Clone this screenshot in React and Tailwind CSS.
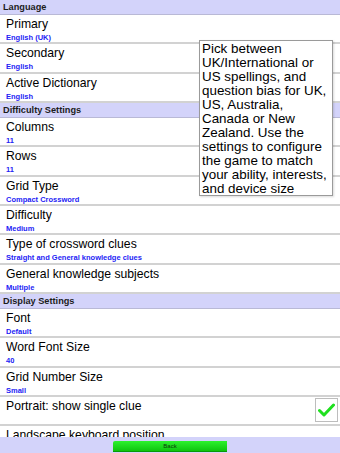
import React from "react";

const sections = [
  {
    title: "Language",
    rows: [
      ["Primary", "English (UK)"],
      ["Secondary", "English"],
      ["Active Dictionary", "English"],
    ],
  },
  {
    title: "Difficulty Settings",
    rows: [
      ["Columns", "11"],
      ["Rows", "11"],
      ["Grid Type", "Compact Crossword"],
      ["Difficulty", "Medium"],
      ["Type of crossword clues", "Straight and General knowledge clues"],
      ["General knowledge subjects", "Multiple"],
    ],
  },
  {
    title: "Display Settings",
    rows: [
      ["Font", "Default"],
      ["Word Font Size", "40"],
      ["Grid Number Size", "Small"],
      ["Portrait: show single clue", null, true],
      ["Landscape keyboard position", null],
    ],
  },
];

const tip = [
  "Pick between",
  "UK/International or",
  "US spellings, and",
  "question bias for UK,",
  "US, Australia,",
  "Canada or New",
  "Zealand. Use the",
  "settings to configure",
  "the game to match",
  "your ability, interests,",
  "and device size",
];

function Header({ title }) {
  return (
    <div className="h-[15px] shrink-0 bg-[#d3d3fa] border-b border-[#b9b9d6] pl-[3px] text-[9.2px] leading-[14px] font-bold text-[#1c1c1c]">
      {title}
    </div>
  );
}

function Row({ label, value, check }) {
  return (
    <div className="h-[29.33px] shrink-0 flex items-start justify-between border-b-2 border-[#d2d2d2] bg-white pl-[6px] pr-[2px]">
      <div className="flex flex-col pt-[2px]">
        <div className="text-[12.2px] leading-[14px] text-black whitespace-nowrap">{label}</div>
        {value && (
          <div className="mt-[2px] text-[7.5px] leading-[9px] font-bold text-[#2323f5] whitespace-nowrap">
            {value}
          </div>
        )}
      </div>
      {check && (
        <div className="mt-[1px] w-[23px] h-[24px] border border-[#bdbdbd] bg-white flex items-center justify-center">
          <svg width="17" height="14" viewBox="0 0 17 14">
            <path d="M1.5 7.5 L6 12 L15.5 2" fill="none" stroke="#1fe01f" strokeWidth="3" strokeLinecap="round" strokeLinejoin="round" />
          </svg>
        </div>
      )}
    </div>
  );
}

export default function App() {
  return (
    <div
      className="relative w-[340px] h-[453px] overflow-hidden bg-white flex flex-col"
      style={{ fontFamily: '"Liberation Sans", Arial, sans-serif' }}
    >
      <div className="flex-1 min-h-0 overflow-hidden flex flex-col">
        {sections.map((s) => (
          <React.Fragment key={s.title}>
            <Header title={s.title} />
            {s.rows.map(([l, v, c]) => (
              <Row key={l} label={l} value={v} check={c} />
            ))}
          </React.Fragment>
        ))}
      </div>
      <div className="h-[16px] shrink-0 bg-[#d3d3fa] flex justify-center items-end pb-[1px]">
        <div className="w-[114px] h-[11px] rounded-tl-[2px] bg-gradient-to-b from-[#2cf22c] to-[#0cc40c] border-b border-[#089a08] flex items-center justify-center text-[6px] leading-none text-[#0a3a0a]">
          Back
        </div>
      </div>
      <div className="absolute left-[199px] top-[40px] w-[134px] h-[156px] bg-white border border-[#9a9a9a] pl-[2px] pt-[1px] text-[13.4px] leading-[14px] text-black shadow-[1px_1px_2px_rgba(0,0,0,0.15)]">
        {tip.map((t) => (
          <div key={t} className="whitespace-nowrap">{t}</div>
        ))}
      </div>
    </div>
  );
}
